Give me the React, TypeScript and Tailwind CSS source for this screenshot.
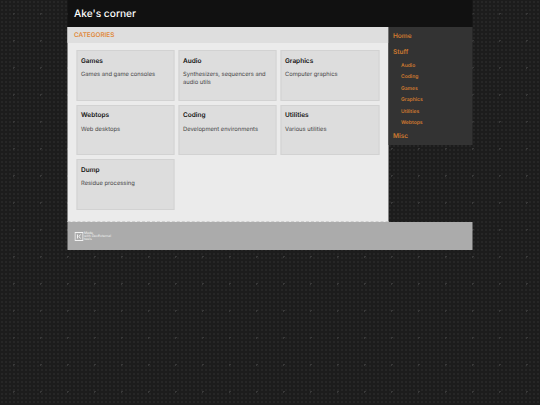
const categories = [
  { title: "Games", text: "Games and game consoles" },
  { title: "Audio", text: "Synthesizers, sequencers and audio utils" },
  { title: "Graphics", text: "Computer graphics" },
  { title: "Webtops", text: "Web desktops" },
  { title: "Coding", text: "Development environments" },
  { title: "Utilities", text: "Various utilities" },
  { title: "Dump", text: "Residue processing" },
];

const stuff = ["Audio", "Coding", "Games", "Graphics", "Utilities", "Webtops"];

export default function App() {
  return (
    <div className="min-h-[405px] bg-[#1c1c1c] bg-[radial-gradient(#383838_1px,transparent_1px),radial-gradient(#262626_1px,transparent_1px)] bg-[size:27px_27px,4px_4px] font-['Inter',sans-serif] [text-rendering:geometricPrecision] antialiased">
      <div className="mx-auto w-[405px] -translate-x-[0.5px]">
        <header className="flex h-[27px] items-center bg-[#111111] px-[7px] pt-[1px]">
          <h1 className="text-[10.2px] leading-none font-medium text-white">Ake's corner</h1>
        </header>

        <div className="flex items-start">
          <main className="h-[195px] w-[321px] border-b border-dashed border-[#cfcfcf] bg-[#ebebeb]">
            <div className="flex h-[16px] items-center bg-[#dedede] px-[7px] pt-[1px]">
              <h2 className="text-[6.4px] font-semibold text-[#e08a3c]">CATEGORIES</h2>
            </div>
            <div className="grid grid-cols-[98px_98px_99px] gap-x-[4px] gap-y-[4px] pt-[7px] pl-[9px]">
              {categories.map((c) => (
                <div key={c.title} className="h-[50.5px] border border-[#d2d2d2] bg-[#dddddd] px-[4px] pt-[5.5px]">
                  <h3 className="text-[6.5px] leading-[9px] font-semibold text-[#111111]">{c.title}</h3>
                  <p className="mt-[5.5px] text-[5.8px] leading-[7.6px] text-[#444444]">{c.text}</p>
                </div>
              ))}
            </div>
          </main>

          <nav className="h-[118px] w-[84px] bg-[#333333] px-[5px] pt-[5px] text-[#d07a30]">
            <div className="text-[6.5px] leading-[9px] font-semibold">Home</div>
            <div className="mt-[7px] text-[6.5px] leading-[9px] font-semibold">Stuff</div>
            <ul className="mt-[5px] flex flex-col gap-[3.4px] pl-[8px] text-[5px] leading-[8px] font-semibold">
              {stuff.map((s) => (
                <li key={s}>{s}</li>
              ))}
            </ul>
            <div className="mt-[5px] text-[6.5px] leading-[9px] font-semibold">Misc</div>
          </nav>
        </div>

        <footer className="flex h-[28px] items-center gap-[1px] bg-[#ababab] pl-[7px]">
          <svg width="9" height="9" viewBox="0 0 9 9" fill="none" stroke="#f2f2f2" strokeWidth="1">
            <rect x="0.5" y="0.5" width="8" height="8" />
            <path d="M3 2.5 V6.5 M6 2.5 L4.5 4.5 L6 6.5" />
          </svg>
          <div className="text-[3.4px] leading-[3px] text-[#f2f2f2]">
            <div>Made</div>
            <div>with DevExternal</div>
            <div>tools</div>
          </div>
        </footer>
      </div>
    </div>
  );
}
